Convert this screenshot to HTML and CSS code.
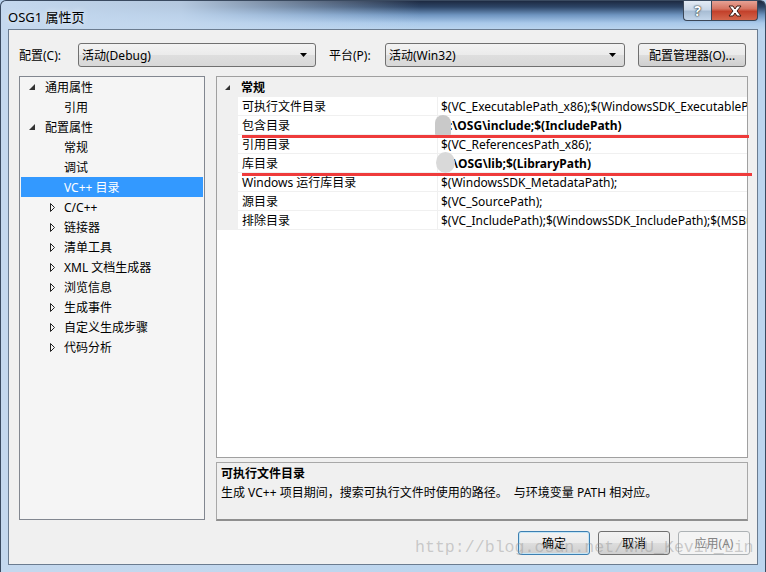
FILE: index.html
```html
<!DOCTYPE html>
<html>
<head>
<meta charset="utf-8">
<link rel="stylesheet" href="styles.css">
</head>
<body>
<div class="window">
  <div class="titlebar">
    <span class="title">OSG1 属性页</span>
    <div class="caption-btns">
      <div class="cbtn help">?</div>
      <div class="cbtn close">
        <svg width="16" height="12" viewBox="0 0 16 12"><path d="M2 1 L6 1 L8 4 L10 1 L14 1 L10 6 L14 11 L10 11 L8 8 L6 11 L2 11 L6 6 Z" fill="#fff" stroke="#3a1a14" stroke-width="1"/></svg>
      </div>
    </div>
  </div>
  <div class="client">
    <div class="toolbar">
      <span class="lbl l1">配置(C):</span>
      <div class="combo c1"><span>活动(Debug)</span><svg class="dd" width="7" height="4" viewBox="0 0 7 4"><path d="M0 0 H7 L3.5 4 Z" fill="#000"/></svg></div>
      <span class="lbl l2">平台(P):</span>
      <div class="combo c2"><span>活动(Win32)</span><svg class="dd" width="7" height="4" viewBox="0 0 7 4"><path d="M0 0 H7 L3.5 4 Z" fill="#000"/></svg></div>
      <div class="btn mgr">配置管理器(O)...</div>
    </div>
    <div class="panels">
      <div class="tree">
        <div class="ti top"><svg class="exp" width="6" height="6" viewBox="0 0 6 6"><path d="M6 0 V6 H0 Z" fill="#333"/></svg><span>通用属性</span></div>
        <div class="ti leaf">引用</div>
        <div class="ti top"><svg class="exp" width="6" height="6" viewBox="0 0 6 6"><path d="M6 0 V6 H0 Z" fill="#333"/></svg><span>配置属性</span></div>
        <div class="ti leaf">常规</div>
        <div class="ti leaf">调试</div>
        <div class="ti leaf sel">VC++ 目录</div>
        <div class="ti col"><svg class="clp" width="5" height="9" viewBox="0 0 5 9"><path d="M0.5 0.5 L4.5 4.5 L0.5 8.5 Z" fill="none" stroke="#222" stroke-width="1"/></svg><span>C/C++</span></div>
        <div class="ti col"><svg class="clp" width="5" height="9" viewBox="0 0 5 9"><path d="M0.5 0.5 L4.5 4.5 L0.5 8.5 Z" fill="none" stroke="#222" stroke-width="1"/></svg><span>链接器</span></div>
        <div class="ti col"><svg class="clp" width="5" height="9" viewBox="0 0 5 9"><path d="M0.5 0.5 L4.5 4.5 L0.5 8.5 Z" fill="none" stroke="#222" stroke-width="1"/></svg><span>清单工具</span></div>
        <div class="ti col"><svg class="clp" width="5" height="9" viewBox="0 0 5 9"><path d="M0.5 0.5 L4.5 4.5 L0.5 8.5 Z" fill="none" stroke="#222" stroke-width="1"/></svg><span>XML 文档生成器</span></div>
        <div class="ti col"><svg class="clp" width="5" height="9" viewBox="0 0 5 9"><path d="M0.5 0.5 L4.5 4.5 L0.5 8.5 Z" fill="none" stroke="#222" stroke-width="1"/></svg><span>浏览信息</span></div>
        <div class="ti col"><svg class="clp" width="5" height="9" viewBox="0 0 5 9"><path d="M0.5 0.5 L4.5 4.5 L0.5 8.5 Z" fill="none" stroke="#222" stroke-width="1"/></svg><span>生成事件</span></div>
        <div class="ti col"><svg class="clp" width="5" height="9" viewBox="0 0 5 9"><path d="M0.5 0.5 L4.5 4.5 L0.5 8.5 Z" fill="none" stroke="#222" stroke-width="1"/></svg><span>自定义生成步骤</span></div>
        <div class="ti col"><svg class="clp" width="5" height="9" viewBox="0 0 5 9"><path d="M0.5 0.5 L4.5 4.5 L0.5 8.5 Z" fill="none" stroke="#222" stroke-width="1"/></svg><span>代码分析</span></div>
      </div>
      <div class="rightcol">
        <div class="grid">
          <div class="ghead"><svg class="exp gexp" width="5" height="5" viewBox="0 0 5 5"><path d="M5 0 V5 H0 Z" fill="#333"/></svg><span>常规</span></div>
          <div class="grow"><div class="gut"></div><div class="gname">可执行文件目录</div><div class="gval">$(VC_ExecutablePath_x86);$(WindowsSDK_ExecutablePath_x86);$(VS_ExecutablePath)</div></div>
          <div class="grow"><div class="gut"></div><div class="gname">包含目录</div><div class="gval b inc">:\OSG\include;$(IncludePath)</div></div>
          <div class="grow"><div class="gut"></div><div class="gname">引用目录</div><div class="gval">$(VC_ReferencesPath_x86);</div></div>
          <div class="grow"><div class="gut"></div><div class="gname">库目录</div><div class="gval b lib">\OSG\lib;$(LibraryPath)</div></div>
          <div class="grow"><div class="gut"></div><div class="gname">Windows 运行库目录</div><div class="gval">$(WindowsSDK_MetadataPath);</div></div>
          <div class="grow"><div class="gut"></div><div class="gname">源目录</div><div class="gval">$(VC_SourcePath);</div></div>
          <div class="grow"><div class="gut"></div><div class="gname">排除目录</div><div class="gval">$(VC_IncludePath);$(WindowsSDK_IncludePath);$(MSBuild_ExecutablePath)</div></div>
          <div class="blob blob1"></div>
          <div class="blob blob2"></div>
          <div class="redline r1"></div>
          <div class="redline r2"></div>
        </div>
        <div class="desc">
          <div class="dtitle">可执行文件目录</div>
          <div class="dtext">生成 VC++ 项目期间，搜索可执行文件时使用的路径。&nbsp; 与环境变量 PATH 相对应。</div>
        </div>
      </div>
    </div>
    <div class="buttons">
      <div class="btn def">确定</div>
      <div class="btn">取消</div>
      <div class="btn dis">应用(A)</div>
    </div>
  </div>
</div>
<div class="watermark">http://blog.csdn.net/WHU_Kevin_Lin</div>
</body>
</html>
```

FILE: styles.css
```css
* { box-sizing: border-box; }
html, body { margin: 0; padding: 0; }
body {
  width: 766px;
  height: 572px;
  overflow: hidden;
  font-family: "Noto Sans", "Noto Sans CJK SC", sans-serif;
  font-size: 12px;
  color: #000;
  background: linear-gradient(to bottom, #b9d3ee 0, #a9c7e6 60%, #b6d1ec 100%);
  position: relative;
}
.window {
  width: 766px;
  height: 572px;
  border-radius: 6px 6px 0 0;
  background:
    linear-gradient(to right, rgba(196,216,238,1) 0, rgba(196,216,238,0.9) 180px, rgba(196,216,238,0) 420px),
    linear-gradient(to bottom, #1d2a41 0, #2d4566 6px, #6f95c0 14px, #a9c9ea 22px, #bcd5ee 29px);
  border: 1px solid #3a4a60;
  border-bottom: none;
}
.titlebar {
  height: 28px;
  display: flex;
  justify-content: space-between;
  align-items: flex-start;
}
.title {
  margin: 6px 0 0 7px;
  font-size: 13px;
  color: #000;
  text-shadow: 0 0 6px rgba(255,255,255,0.9);
}
.caption-btns {
  display: flex;
  margin-right: 7px;
}
.cbtn {
  height: 20px;
  display: flex;
  align-items: center;
  justify-content: center;
  border: 1px solid #3b4758;
  border-top: none;
}
.help {
  width: 28px;
  border-radius: 0 0 0 4px;
  border-right: none;
  background: linear-gradient(to bottom, #e3ebf5 0, #c9d7e8 45%, #a8bdd4 55%, #c3d6ea 100%);
  color: #fff;
  font-weight: bold;
  font-size: 14px;
  text-shadow: 0 0 2px #233, 0 0 1px #000;
}
.close {
  width: 47px;
  border-radius: 0 0 4px 0;
  background: linear-gradient(to bottom, #e6a295 0, #d67563 40%, #c3412b 55%, #d4664c 100%);
}
.client {
  margin-left: 7px;
  width: 750px;
  height: 536px;
  border: 1px solid #6b7c90;
  background: #f0f0f0;
}
.toolbar {
  display: flex;
  align-items: center;
  height: 24px;
  margin-top: 13px;
  padding-left: 10px;
}
.lbl { white-space: nowrap; }
.l1 { width: 59px; }
.l2 { width: 56px; margin-left: 13px; }
.combo {
  height: 24px;
  border: 1px solid #707070;
  border-radius: 3px;
  background: linear-gradient(to bottom, #f3f3f3 0, #ebebeb 50%, #dedede 51%, #d8d8d8 100%);
  display: flex;
  align-items: center;
  justify-content: space-between;
  padding: 0 8px 0 3px;
}
.c1 { width: 238px; }
.c2 { width: 240px; }
.btn {
  height: 24px;
  border: 1px solid #707070;
  border-radius: 3px;
  background: linear-gradient(to bottom, #f2f2f2 0, #ebebeb 50%, #dddddd 51%, #cfcfcf 100%);
  display: flex;
  align-items: center;
  justify-content: center;
  white-space: nowrap;
}
.mgr { width: 108px; margin-left: 13px; }
.panels {
  display: flex;
  margin-top: 9px;
  padding-left: 10px;
  gap: 11px;
}
.tree {
  width: 186px;
  height: 444px;
  border: 1px solid #828790;
  background: #f5f5f5;
  padding: 0 1px;
}
.ti {
  height: 20px;
  display: flex;
  align-items: center;
  white-space: nowrap;
}
.ti.top { padding-left: 8px; }
.ti.top .exp { margin-right: 10px; }
.ti.leaf { padding-left: 43px; }
.ti.col { padding-left: 29px; }
.ti.col .clp { margin-right: 9px; }
.ti.sel { background: #3399ff; color: #fff; }
.rightcol {
  width: 532px;
  display: flex;
  flex-direction: column;
  gap: 4px;
}
.grid {
  position: relative;
  height: 382px;
  border: 1px solid #a0a0a0;
  background: #fff;
}
.ghead {
  height: 20px;
  display: flex;
  align-items: center;
  background: #f0f0f0;
  font-weight: bold;
}
.gexp { margin: 0 11px 0 8px; }
.grow {
  height: 19px;
  display: flex;
}
.gut {
  width: 21px;
  background: #f0f0f0;
}
.gname {
  width: 200px;
  padding: 1px 0 0 4px;
  line-height: 17px;
  border-bottom: 1px solid #f0f0f0;
  border-right: 1px solid #f0f0f0;
  white-space: nowrap;
}
.gval {
  flex: 1;
  padding: 1px 0 0 3px;
  line-height: 17px;
  border-bottom: 1px solid #f0f0f0;
  white-space: nowrap;
  overflow: hidden;
}
.gval.b { font-weight: bold; }
.gval.inc { padding-left: 11px; }
.gval.lib { padding-left: 15px; }
.blob {
  position: absolute;
}
.blob1 {
  left: 218px;
  top: 38px;
  width: 16px;
  height: 20px;
  background: #c9c9c9;
  border-radius: 8px 8px 1px 1px;
}
.blob2 {
  left: 219px;
  top: 75px;
  width: 19px;
  height: 21px;
  background: #d9d9d9;
  border-radius: 50%;
}
.redline {
  position: absolute;
  height: 3px;
  background: #ef3b3b;
  left: 25px;
}
.r1 { top: 58px; width: 507px; }
.r2 { top: 96px; width: 510px; }
.desc {
  height: 59px;
  border: 1px solid #a8a8a8;
  border-bottom: 2px solid #8f8f8f;
  background: #f0f0f0;
  padding: 1px 4px;
}
.dtitle { font-weight: bold; line-height: 19px; }
.dtext { line-height: 19px; }
.buttons {
  display: flex;
  justify-content: flex-end;
  gap: 8px;
  margin-top: 10px;
  padding-right: 7px;
}
.buttons .btn { width: 72px; height: 24px; }
.btn.def {
  border-color: #3c7fb1;
  box-shadow: inset 0 0 0 1px #c4e5f6;
}
.btn.dis {
  border-color: #adb2b5;
  background: #f4f4f4;
  color: #838383;
}
.watermark {
  position: absolute;
  left: 415px;
  top: 538px;
  font-family: "Liberation Mono", monospace;
  font-size: 16.6px;
  color: rgba(150,150,150,0.45);
  white-space: nowrap;
  pointer-events: none;
}
```
